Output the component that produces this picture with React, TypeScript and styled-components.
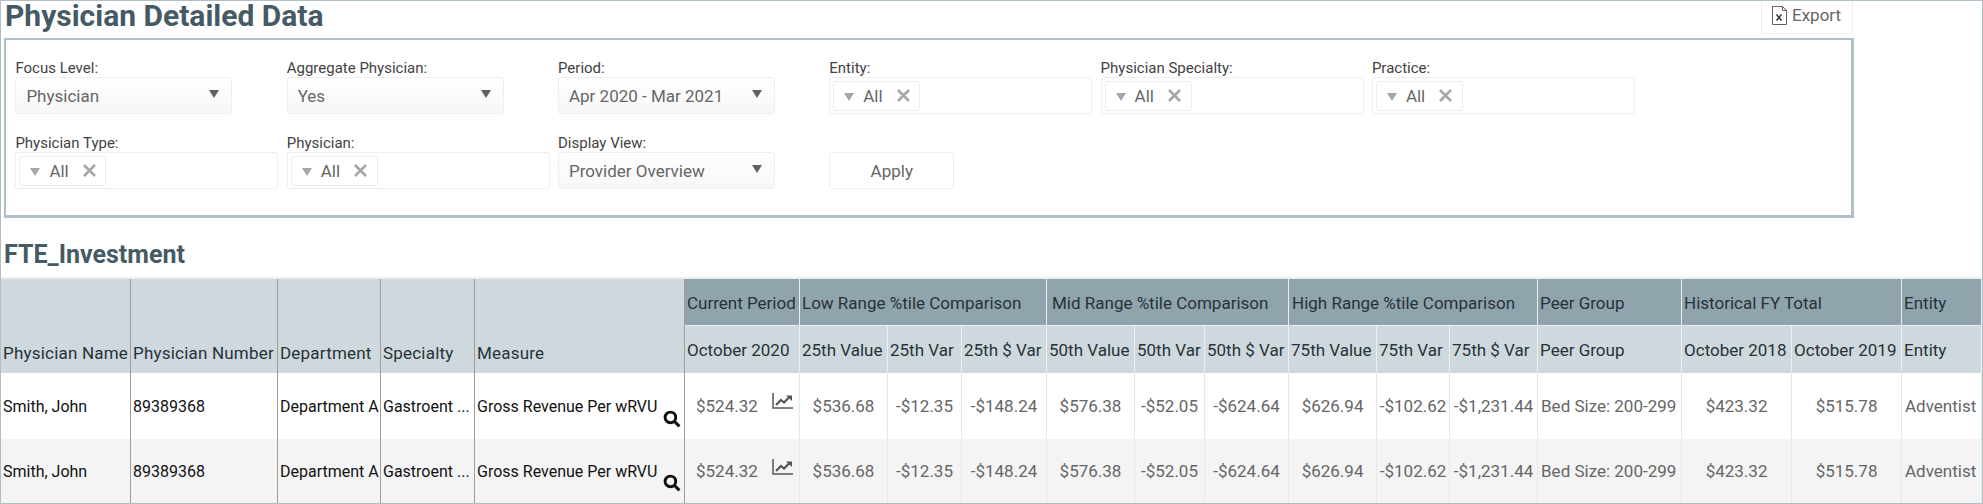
import styled, { createGlobalStyle } from 'styled-components'

const GlobalStyle = createGlobalStyle`
  html, body {
    margin: 0;
    padding: 0;
    background: #fff;
  }
  body {
    font-family: Roboto, "Liberation Sans", sans-serif;
  }
`

const Page = styled.div`
  box-sizing: border-box;
  width: 1983px;
  height: 504px;
  overflow: hidden;
  border: 1px solid #b0bec5;
  border-bottom: 0;
`

const TopBar = styled.div`
  display: flex;
  justify-content: space-between;
  width: 1852px;
  height: 37px;
`

const Title = styled.h1`
  margin: 0 0 0 4px;
  font-size: 30px;
  line-height: 30px;
  font-weight: 700;
  color: #455a64;
`

const ExportButton = styled.div`
  box-sizing: border-box;
  display: flex;
  align-items: center;
  gap: 4px;
  width: 92px;
  height: 33px;
  padding: 0 0 4px 9px;
  border-left: 1px solid #eee;
  border-bottom: 1px solid #eee;
  border-right: 1px solid #eee;
  border-radius: 0 0 3px 3px;
  font-size: 17px;
  color: #666;
`

const FilterBox = styled.div`
  box-sizing: border-box;
  display: grid;
  grid-template-columns: repeat(6, 271.3px);
  grid-auto-rows: 75px;
  align-content: start;
  width: 1850px;
  height: 180px;
  margin-left: 3px;
  padding: 19px 0 0 9.4px;
  border: 2px solid #b0bec5;
  border-bottom-width: 3px;
  border-right-width: 3px;
`

const Field = styled.div`
  display: flex;
  flex-direction: column;
`

const Label = styled.label`
  height: 18px;
  font-size: 15px;
  line-height: 18px;
  color: #424242;
`

const SelectBox = styled.div`
  box-sizing: border-box;
  display: flex;
  align-items: center;
  justify-content: space-between;
  width: 217px;
  height: 37px;
  padding: 0 12px 0 10px;
  border: 1px solid #eee;
  border-radius: 3px;
  background: linear-gradient(#fff, #f7f7f7);
  font-size: 17px;
  color: #666;
`

const Caret = styled.span`
  width: 0;
  height: 0;
  margin-top: -3px;
  border-left: 5px solid transparent;
  border-right: 5px solid transparent;
  border-top: 8px solid #616161;
`

const MultiBox = styled.div`
  box-sizing: border-box;
  display: flex;
  align-items: center;
  width: 263px;
  height: 37px;
  padding-left: 3px;
  border: 1px solid #eee;
  border-radius: 3px;
`

const Chip = styled.div`
  box-sizing: border-box;
  display: flex;
  align-items: center;
  width: 87px;
  height: 30px;
  padding-left: 10px;
  border: 1px solid #eee;
  border-radius: 3px;
  font-size: 17px;
  color: #666;
`

const ChipCaret = styled.span`
  width: 0;
  height: 0;
  margin: 3px 9px 0 0;
  border-left: 5px solid transparent;
  border-right: 5px solid transparent;
  border-top: 8px solid #a6a6a6;
`

const ChipClose = styled.svg`
  width: 13px;
  height: 13px;
  margin-left: 14px;
  stroke: #a6a6a6;
  stroke-width: 2.6;
`

const ApplyButton = styled.button`
  box-sizing: border-box;
  width: 125px;
  height: 37px;
  margin-top: 18px;
  padding: 0;
  border: 1px solid #eee;
  border-radius: 3px;
  background: #fff;
  font-family: inherit;
  font-size: 17px;
  color: #666;
`

const Section = styled.h2`
  margin: 22px 0 0 3px;
  font-size: 25px;
  line-height: 30px;
  font-weight: 700;
  color: #455a64;
`

const Table = styled.table`
  width: 1981px;
  margin-top: 7px;
  border-top: 2px solid #eee;
  border-bottom: 1px solid #b0bec5;
  border-collapse: separate;
  border-spacing: 0;
  table-layout: fixed;
  white-space: nowrap;
`

const Col = styled.col<{ $width: number }>`
  width: ${(props) => props.$width}px;
`

const HeadCell = styled.th<{ $band?: boolean; $fixed?: boolean; $inset?: number }>`
  box-sizing: border-box;
  height: 47px;
  padding: 1px 0 ${(props) => (props.$fixed ? '10px' : '0')} ${(props) => props.$inset ?? 2}px;
  overflow: hidden;
  vertical-align: ${(props) => (props.$fixed ? 'bottom' : 'middle')};
  text-align: left;
  font-size: 17px;
  font-weight: 400;
  letter-spacing: ${(props) => (props.$fixed ? '0.2px' : '0')};
  color: #263238;
  background: ${(props) => (props.$band ? '#90a4ae' : '#cfd8dc')};
  border-right: 1px solid ${(props) => (props.$fixed ? '#9e9e9e' : '#eceff1')};
  border-bottom: ${(props) => (props.$band ? '1px solid #eceff1' : '0')};
`

const Cell = styled.td<{ $text?: boolean; $fixed?: boolean; $alt?: boolean; $lead?: boolean }>`
  box-sizing: border-box;
  position: relative;
  padding: 0 0 0 ${(props) => (props.$lead ? '11px' : props.$fixed ? '2px' : props.$text ? '3px' : '0')};
  overflow: hidden;
  text-align: ${(props) => (props.$text || props.$lead ? 'left' : 'center')};
  font-size: ${(props) => (props.$fixed ? '16px' : '17px')};
  color: ${(props) => (props.$fixed ? '#111' : '#666')};
  background: ${(props) => (props.$alt ? '#f4f4f4' : '#fff')};
  border-right: 1px solid ${(props) => (props.$fixed ? '#9e9e9e' : '#e8e8e8')};
`

const Row = styled.tr<{ $height: number }>`
  height: ${(props) => props.$height}px;
`

const SearchIcon = styled.svg`
  position: absolute;
  right: 3px;
  bottom: 11px;
  width: 18px;
  height: 18px;
  fill: none;
  stroke: #111;
  stroke-width: 2.8;
`

const TrendIcon = styled.svg`
  position: absolute;
  right: 6px;
  top: 20px;
  width: 21px;
  height: 16px;
  fill: none;
  stroke: #555;
`

const columns = [130, 147, 103, 94, 210, 115, 88, 74, 85, 88, 70, 84, 88, 73, 88, 144, 110, 110, 80]

const groups = [
  { label: 'Current Period', span: 1 },
  { label: 'Low Range %tile Comparison', span: 3 },
  { label: 'Mid Range %tile Comparison', span: 3, inset: 5 },
  { label: 'High Range %tile Comparison', span: 3, inset: 3 },
  { label: 'Peer Group', span: 1 },
  { label: 'Historical FY Total', span: 2 },
  { label: 'Entity', span: 1 },
]

const subHeads = [
  'October 2020',
  '25th Value',
  '25th Var',
  '25th $ Var',
  '50th Value',
  '50th Var',
  '50th $ Var',
  '75th Value',
  '75th Var',
  '75th $ Var',
  'Peer Group',
  'October 2018',
  'October 2019',
  'Entity',
]

const values = [
  '$536.68',
  '-$12.35',
  '-$148.24',
  '$576.38',
  '-$52.05',
  '-$624.64',
  '$626.94',
  '-$102.62',
  '-$1,231.44',
  'Bed Size: 200-299',
  '$423.32',
  '$515.78',
  'Adventist',
]

function DataRow({ alt, height }: { alt?: boolean; height: number }) {
  return (
    <Row $height={height}>
      <Cell $text $fixed $alt={alt}>Smith, John</Cell>
      <Cell $text $fixed $alt={alt}>89389368</Cell>
      <Cell $text $fixed $alt={alt}>Department A</Cell>
      <Cell $text $fixed $alt={alt}>Gastroent ...</Cell>
      <Cell $text $fixed $alt={alt}>
        Gross Revenue Per wRVU
        <SearchIcon viewBox="0 0 17 17">
          <circle cx="7" cy="7" r="5" />
          <path d="M11 11l4.5 4.5" />
        </SearchIcon>
      </Cell>
      <Cell $lead $alt={alt}>
        $524.32
        <TrendIcon viewBox="0 0 21 16">
          <path d="M1 0v15h20" strokeWidth="1.5" />
          <path d="M4 12l5-5 3 2.5 5-5" strokeWidth="2.2" />
          <path d="M14 2.5h6v5.5z" fill="#555" stroke="none" />
        </TrendIcon>
      </Cell>
      {values.map((value, index) => (
        <Cell
          key={index}
          $alt={alt}
          $text={value === 'Adventist' || value.startsWith('Bed')}
        >
          {value}
        </Cell>
      ))}
    </Row>
  )
}

function App() {
  return (
    <Page>
      <GlobalStyle />
      <TopBar>
        <Title>Physician Detailed Data</Title>
        <ExportButton>
          <svg width="17" height="19" viewBox="0 0 17 19" fill="none" stroke="#616161">
            <path d="M1.5.5h10l4 4v14h-14z" />
            <path d="M11.5.5v4h4" />
            <path d="M5.5 8.5l5 6M10.5 8.5l-5 6" stroke="#333" strokeWidth="1.4" />
          </svg>
          Export
        </ExportButton>
      </TopBar>
      <FilterBox>
        <Field>
          <Label>Focus Level:</Label>
          <SelectBox>Physician<Caret /></SelectBox>
        </Field>
        <Field>
          <Label>Aggregate Physician:</Label>
          <SelectBox>Yes<Caret /></SelectBox>
        </Field>
        <Field>
          <Label>Period:</Label>
          <SelectBox>Apr 2020 - Mar 2021<Caret /></SelectBox>
        </Field>
        {['Entity:', 'Physician Specialty:', 'Practice:', 'Physician Type:', 'Physician:'].map((label) => (
          <Field key={label}>
            <Label>{label}</Label>
            <MultiBox>
              <Chip>
                <ChipCaret />
                All
                <ChipClose viewBox="0 0 13 13">
                  <path d="M1 1l11 11M12 1L1 12" />
                </ChipClose>
              </Chip>
            </MultiBox>
          </Field>
        ))}
        <Field>
          <Label>Display View:</Label>
          <SelectBox>Provider Overview<Caret /></SelectBox>
        </Field>
        <Field>
          <ApplyButton>Apply</ApplyButton>
        </Field>
      </FilterBox>
      <Section>FTE_Investment</Section>
      <Table>
        <colgroup>
          {columns.map((width, index) => (
            <Col key={index} $width={width} />
          ))}
        </colgroup>
        <thead>
          <tr>
            {['Physician Name', 'Physician Number', 'Department', 'Specialty', 'Measure'].map((label) => (
              <HeadCell key={label} rowSpan={2} $fixed>
                {label}
              </HeadCell>
            ))}
            {groups.map((group) => (
              <HeadCell key={group.label} colSpan={group.span} $band $inset={group.inset}>
                {group.label}
              </HeadCell>
            ))}
          </tr>
          <tr>
            {subHeads.map((label, index) => (
              <HeadCell key={index}>{label}</HeadCell>
            ))}
          </tr>
        </thead>
        <tbody>
          <DataRow height={66} />
          <DataRow alt height={64} />
        </tbody>
      </Table>
    </Page>
  )
}

export default App
